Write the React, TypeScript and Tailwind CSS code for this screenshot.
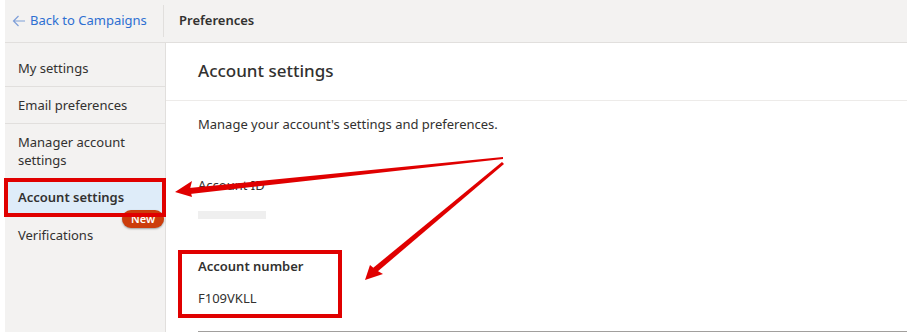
import React from "react";

const font = { fontFamily: '"Noto Sans", "Open Sans", sans-serif' };

function Arrows() {
  return (
    <svg className="pointer-events-none absolute left-0 top-0" width={907} height={332} viewBox="0 0 907 332">
      {/* arrow 1: to sidebar */}
      <polygon points="503,157 503,159 190,194 189,188" fill="#e00000" />
      <polygon points="175,192 192,181 190,189 192,197" fill="#e00000" />
      {/* arrow 2: to account number */}
      <polygon points="502,162 504,164 377,272 373,268" fill="#e00000" />
      <polygon points="365,280 370,265 376,270 383,274" fill="#e00000" />
    </svg>
  );
}

export default function App() {
  return (
    <div className="relative w-[907px] h-[332px] overflow-hidden bg-white text-[#323130]" style={font}>
      <div className="ml-[5px] flex h-full flex-col">
        {/* header */}
        <div className="flex h-[43px] shrink-0 items-center border-b border-[#e1dfdd] bg-[#f3f2f1]">
          <div className="flex w-[158px] items-center gap-[4px] pl-[7px] text-[13px] text-[#2d6fd2]">
            <svg width="14" height="12" viewBox="0 0 14 12" fill="none" stroke="#7f9fd8" strokeWidth="1.2">
              <path d="M13 6H1.5M6.5 1L1.5 6l5 5" />
            </svg>
            <span>Back to Campaigns</span>
          </div>
          <div className="h-[32px] w-px bg-[#e1dfdd]" />
          <div className="pl-[15px] text-[13px] font-semibold text-[#323130]">Preferences</div>
        </div>
        <div className="flex min-h-0 flex-1">
          {/* sidebar */}
          <div className="relative w-[161px] shrink-0 border-r border-[#e1dfdd] bg-[#f3f2f1] pt-[7px] text-[13px] leading-[18px]">
            <div className="border-b border-[#e1dfdd] py-[9px] pl-[13px]">My settings</div>
            <div className="border-b border-[#e1dfdd] py-[9px] pl-[13px]">Email preferences</div>
            <div className="py-[9px] pl-[13px]">Manager account<br />settings</div>
            <div className="relative">
              <div className="bg-[#deecf9] pt-[10px] pb-[11px] pl-[13px] font-semibold">Account settings</div>
              <div className="absolute left-[117px] top-[32px] flex h-[18px] w-[42px] items-center justify-center rounded-[9px] bg-[#cc3d0c] text-[11px] font-semibold text-white shadow-[0_1px_2px_rgba(0,0,0,0.35)]">
                New
              </div>
              <div className="absolute -left-[1px] top-0 h-[39px] w-[162px] border-[4px] border-[#e00000]" />
            </div>
            <div className="py-[9px] pl-[13px]">Verifications</div>
          </div>
          {/* main */}
          <div className="flex-1 bg-white">
            <div className="flex h-[58px] items-center border-b border-[#edebe9] pl-[32px] pb-[1px] text-[17px] font-medium">
              Account settings
            </div>
            <div className="pl-[32px] text-[13px] leading-[18px]">
              <div className="pt-[14px]">Manage your account's settings and preferences.</div>
              <div className="pt-[43px]">Account ID</div>
              <div className="mt-[17px] h-[8px] w-[68px] bg-[#efefef]" />
              <div className="relative mt-[38px]">
                <div className="font-semibold">Account number</div>
                <div className="pt-[14px]">F109VKLL</div>
                <div className="absolute -left-[20px] -top-[7px] h-[68px] w-[164px] border-[4px] border-[#e00000]" />
              </div>
              <div className="mt-[24px] h-px w-full bg-[#a19f9d]" />
            </div>
          </div>
        </div>
      </div>
      <Arrows />
    </div>
  );
}
